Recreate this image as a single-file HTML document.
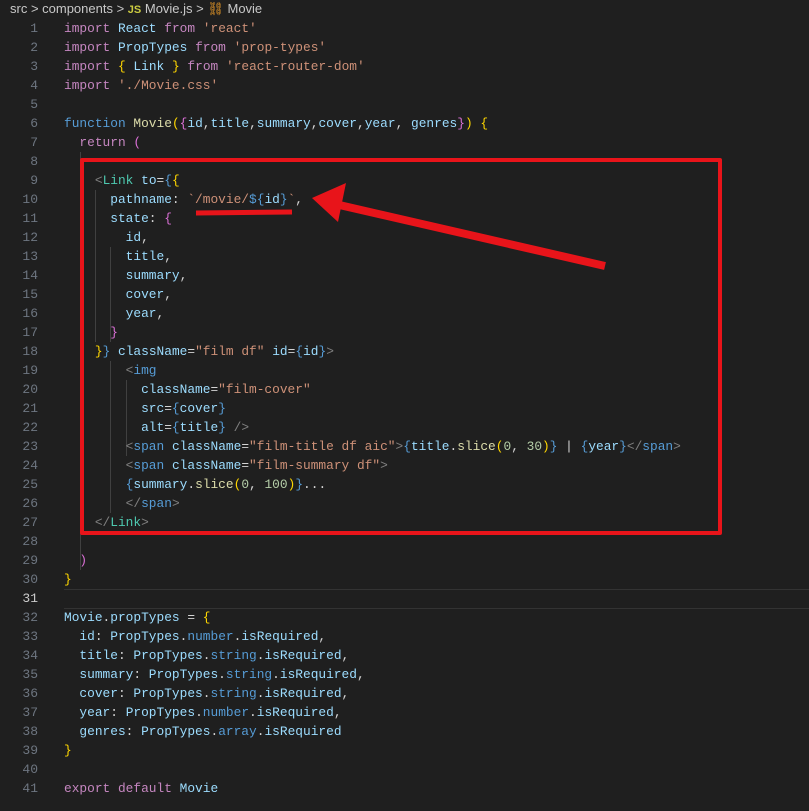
<!DOCTYPE html><html><head><style>
body{margin:0;width:809px;height:811px;background:#1f1f1f;overflow:hidden;position:relative;font-family:"Liberation Mono",monospace;}
.bc{position:absolute;top:0;left:10px;height:17px;font:13px "Liberation Sans",sans-serif;color:#c8c8c8;line-height:17px;white-space:nowrap}
.ln{position:absolute;left:0;width:38px;text-align:right;color:#6e7681;font-size:13px}
.code{position:absolute;left:64px;top:19px;font-size:12.85px;line-height:19px;color:#d4d4d4}
.ln div,.code div{height:19px;line-height:19px}
.code div{white-space:pre}
.k{color:#c586c0}.b{color:#569cd6}.v{color:#9cdcfe}.s{color:#ce9178}.f{color:#dcdcaa}.y{color:#ffd700}.p{color:#da70d6}.c{color:#179fff}.g{color:#808080}.t{color:#4ec9b0}.n{color:#b5cea8}
.guide{position:absolute;width:1px;background:#404040}
</style></head><body>
<div class="bc">src &gt; components &gt; <span style="color:#cbcb41;font-weight:bold;font-size:11px">JS</span> Movie.js &gt; <span style="color:#ee9d28">⛓</span> Movie</div>
<div style="position:absolute;left:64px;right:0;top:589px;height:18px;border-top:1px solid #333;border-bottom:1px solid #333"></div>
<div class="guide" style="left:80px;top:152px;height:418px"></div>
<div class="guide" style="left:95px;top:190px;height:152px"></div>
<div class="guide" style="left:110px;top:247px;height:95px"></div>
<div class="guide" style="left:126px;top:380px;height:76px"></div>
<div class="guide" style="left:110px;top:361px;height:152px"></div>
<div class="ln" style="top:19px">
<div>1</div><div>2</div><div>3</div><div>4</div><div>5</div><div>6</div><div>7</div><div>8</div><div>9</div><div>10</div><div>11</div><div>12</div><div>13</div><div>14</div><div>15</div><div>16</div><div>17</div><div>18</div><div>19</div><div>20</div><div>21</div><div>22</div><div>23</div><div>24</div><div>25</div><div>26</div><div>27</div><div>28</div><div>29</div><div>30</div><div style="color:#ccc">31</div><div>32</div><div>33</div><div>34</div><div>35</div><div>36</div><div>37</div><div>38</div><div>39</div><div>40</div><div>41</div></div>
<div class="code">
<div><span class="k">import</span> <span class="v">React</span> <span class="k">from</span> <span class="s">'react'</span></div>
<div><span class="k">import</span> <span class="v">PropTypes</span> <span class="k">from</span> <span class="s">'prop-types'</span></div>
<div><span class="k">import</span> <span class="y">{</span> <span class="v">Link</span> <span class="y">}</span> <span class="k">from</span> <span class="s">'react-router-dom'</span></div>
<div><span class="k">import</span> <span class="s">'./Movie.css'</span></div>
<div></div>
<div><span class="b">function</span> <span class="f">Movie</span><span class="y">(</span><span class="p">{</span><span class="v">id</span>,<span class="v">title</span>,<span class="v">summary</span>,<span class="v">cover</span>,<span class="v">year</span>, <span class="v">genres</span><span class="p">}</span><span class="y">)</span> <span class="y">{</span></div>
<div>  <span class="k">return</span> <span class="p">(</span></div>
<div></div>
<div>    <span class="g">&lt;</span><span class="t">Link</span> <span class="v">to</span>=<span class="b">{</span><span class="y">{</span></div>
<div>      <span class="v">pathname</span>: <span class="s">`/movie/</span><span class="b">${</span><span class="v">id</span><span class="b">}</span><span class="s">`</span>,</div>
<div>      <span class="v">state</span>: <span class="p">{</span></div>
<div>        <span class="v">id</span>,</div>
<div>        <span class="v">title</span>,</div>
<div>        <span class="v">summary</span>,</div>
<div>        <span class="v">cover</span>,</div>
<div>        <span class="v">year</span>,</div>
<div>      <span class="p">}</span></div>
<div>    <span class="y">}</span><span class="b">}</span> <span class="v">className</span>=<span class="s">"film df"</span> <span class="v">id</span>=<span class="b">{</span><span class="v">id</span><span class="b">}</span><span class="g">&gt;</span></div>
<div>        <span class="g">&lt;</span><span class="b">img</span></div>
<div>          <span class="v">className</span>=<span class="s">"film-cover"</span></div>
<div>          <span class="v">src</span>=<span class="b">{</span><span class="v">cover</span><span class="b">}</span></div>
<div>          <span class="v">alt</span>=<span class="b">{</span><span class="v">title</span><span class="b">}</span> <span class="g">/&gt;</span></div>
<div>        <span class="g">&lt;</span><span class="b">span</span> <span class="v">className</span>=<span class="s">"film-title df aic"</span><span class="g">&gt;</span><span class="b">{</span><span class="v">title</span>.<span class="f">slice</span><span class="y">(</span><span class="n">0</span>, <span class="n">30</span><span class="y">)</span><span class="b">}</span> | <span class="b">{</span><span class="v">year</span><span class="b">}</span><span class="g">&lt;/</span><span class="b">span</span><span class="g">&gt;</span></div>
<div>        <span class="g">&lt;</span><span class="b">span</span> <span class="v">className</span>=<span class="s">"film-summary df"</span><span class="g">&gt;</span></div>
<div>        <span class="b">{</span><span class="v">summary</span>.<span class="f">slice</span><span class="y">(</span><span class="n">0</span>, <span class="n">100</span><span class="y">)</span><span class="b">}</span>...</div>
<div>        <span class="g">&lt;/</span><span class="b">span</span><span class="g">&gt;</span></div>
<div>    <span class="g">&lt;/</span><span class="t">Link</span><span class="g">&gt;</span></div>
<div></div>
<div>  <span class="p">)</span></div>
<div><span class="y">}</span></div>
<div></div>
<div><span class="v">Movie</span>.<span class="v">propTypes</span> = <span class="y">{</span></div>
<div>  <span class="v">id</span>: <span class="v">PropTypes</span>.<span class="b">number</span>.<span class="v">isRequired</span>,</div>
<div>  <span class="v">title</span>: <span class="v">PropTypes</span>.<span class="b">string</span>.<span class="v">isRequired</span>,</div>
<div>  <span class="v">summary</span>: <span class="v">PropTypes</span>.<span class="b">string</span>.<span class="v">isRequired</span>,</div>
<div>  <span class="v">cover</span>: <span class="v">PropTypes</span>.<span class="b">string</span>.<span class="v">isRequired</span>,</div>
<div>  <span class="v">year</span>: <span class="v">PropTypes</span>.<span class="b">number</span>.<span class="v">isRequired</span>,</div>
<div>  <span class="v">genres</span>: <span class="v">PropTypes</span>.<span class="b">array</span>.<span class="v">isRequired</span></div>
<div><span class="y">}</span></div>
<div></div>
<div><span class="k">export</span> <span class="k">default</span> <span class="v">Movie</span></div>
</div>
<div style="position:absolute;left:80px;top:158px;width:634px;height:369px;border:4px solid #e8141a;border-radius:2px"></div>
<svg style="position:absolute;left:0;top:0" width="809" height="811">
<line x1="196" y1="213" x2="292" y2="212" stroke="#e8141a" stroke-width="5"/>
<line x1="605" y1="266" x2="335" y2="204" stroke="#e8141a" stroke-width="8"/>
<polygon points="312,198 346,183 338,222" fill="#e8141a"/>
</svg>
</body></html>
